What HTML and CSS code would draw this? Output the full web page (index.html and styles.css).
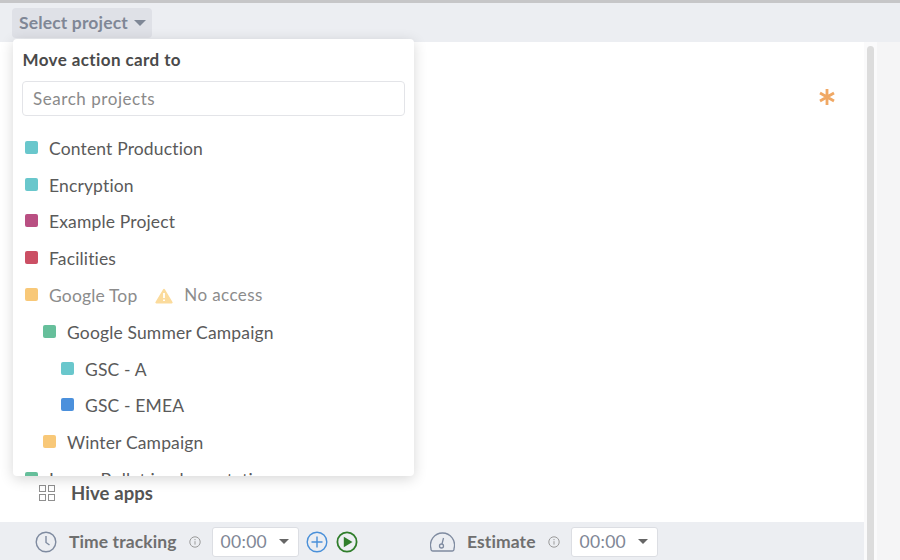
FILE: index.html
```html
<!DOCTYPE html>
<html lang="en">
<head>
<meta charset="utf-8">
<title>Move action card</title>
<link rel="stylesheet" href="styles.css">
</head>
<body>
<div class="page">
  <div class="topline"></div>
  <header class="header">
    <button class="select-btn">Select project <span class="caret caret-btn"></span></button>
  </header>
  <div class="main">
    <div class="content">
      <div class="body">
        <svg class="asterisk" width="18" height="18" viewBox="0 0 18 18" fill="none" stroke="#f0a864" stroke-width="2.800"><path d="M9 1v16M2 5l14 8M16 5L2 13"/></svg>
        <div class="apps">
          <svg class="apps-icon" width="16" height="16" viewBox="0 0 16 16" fill="none" stroke="#8f8f8f" stroke-width="1"><rect x="0.5" y="0.5" width="6" height="6"/><rect x="9.5" y="0.5" width="6" height="6"/><rect x="0.5" y="9.5" width="6" height="6"/><rect x="9.5" y="9.5" width="6" height="6"/></svg>
          <span>Hive apps</span>
        </div>
      </div>
      <div class="footer">
        <div class="group group-time">
          <svg class="ficon" width="22" height="22" viewBox="0 0 22 22" fill="none" stroke="#7f8ba0" stroke-width="1.4"><circle cx="11" cy="11" r="9.800"/><path d="M11 5v6.500l3.500 2.500"/></svg>
          <span class="flabel">Time tracking</span>
          <svg class="info" width="12" height="12" viewBox="0 0 12 12" fill="none" stroke="#9a9a9a" stroke-width="1"><circle cx="6" cy="6" r="5.200"/><path d="M6 5.200v3.400M6 3v1.200"/></svg>
          <div class="time"><span>00:00</span><span class="caret"></span></div>
          <svg class="add" width="22" height="22" viewBox="0 0 22 22" fill="none" stroke="#4a90d9" stroke-width="1.4"><circle cx="11" cy="11" r="9.800"/><path d="M11 5.500v11M5.500 11h11"/></svg>
          <svg class="play" width="22" height="22" viewBox="0 0 22 22"><circle cx="11" cy="11" r="9.600" fill="none" stroke="#2f7d2b" stroke-width="1.800"/><path d="M7.800 5.800L16.500 11l-8.700 5.200z" fill="#2f7d2b"/></svg>
        </div>
        <div class="group group-estimate">
          <svg class="ficon" width="25" height="20" viewBox="0 0 25 20" fill="none" stroke="#7f8ba0" stroke-width="1.3"><path d="M3 19h19a2 2 0 0 0 2-2.500A12 12 0 0 0 12.500 1 12 12 0 0 0 1 16.500 2 2 0 0 0 3 19z"/><circle cx="11.500" cy="14" r="2"/><path d="M12 12l1.500-6"/></svg>
          <span class="flabel">Estimate</span>
          <svg class="info" width="12" height="12" viewBox="0 0 12 12" fill="none" stroke="#9a9a9a" stroke-width="1"><circle cx="6" cy="6" r="5.200"/><path d="M6 5.200v3.400M6 3v1.200"/></svg>
          <div class="time"><span>00:00</span><span class="caret"></span></div>
        </div>
      </div>
    </div>
    <div class="gutter"><div class="thumb"></div></div>
    <div class="rightpane"></div>
  </div>
  <div class="popover">
    <h2 class="pop-title">Move action card to</h2>
    <input class="search" type="text" placeholder="Search projects">
    <ul class="list">
      <li class="row"><i class="sq teal"></i>Content Production</li>
      <li class="row"><i class="sq teal"></i>Encryption</li>
      <li class="row"><i class="sq plum"></i>Example Project</li>
      <li class="row"><i class="sq red"></i>Facilities</li>
      <li class="row muted"><i class="sq amber"></i>Google Top
        <svg class="warn" width="18" height="16" viewBox="0 0 18 16"><path d="M9 .8a1.200 1.200 0 0 1 1 .6l7.500 12.700a1 1 0 0 1-.9 1.500H1.400a1 1 0 0 1-.9-1.500L8 1.400A1.200 1.200 0 0 1 9 .8z" fill="#fbdb9c"/><path d="M9 5v5M9 11.500v1.500" stroke="#fff" stroke-width="1.800"/></svg>
        <span class="noaccess">No access</span></li>
      <li class="row lvl1"><i class="sq green"></i>Google Summer Campaign</li>
      <li class="row lvl2"><i class="sq teal"></i>GSC - A</li>
      <li class="row lvl2"><i class="sq blue"></i>GSC - EMEA</li>
      <li class="row lvl1"><i class="sq amber"></i>Winter Campaign</li>
      <li class="row"><i class="sq green"></i>Image Bullet implementation</li>
    </ul>
  </div>
</div>
</body>
</html>
```
FILE: styles.css
```css
* { box-sizing: border-box; }
html, body { margin: 0; padding: 0; }
body { width: 900px; height: 560px; overflow: hidden; background: #fff; font-family: "Lato", "Open Sans", sans-serif; color: #555; }
.page { position: relative; width: 900px; height: 560px; overflow: hidden; display: flex; flex-direction: column; }
.topline { height: 3px; background: #c6c6c8; flex: none; }
.header { height: 39px; flex: none; background: #eceef2; padding: 5px 0 0 12px; }
.select-btn { display: flex; align-items: center; gap: 6px; width: 140px; height: 30px; padding: 0 0 2px 7px; border: 0; border-radius: 4px; background: #dfe1e7; color: #7f8796; font: 700 17.500px "Lato", sans-serif; letter-spacing: .15px; }
.main { flex: 1; display: flex; min-height: 0; overflow: hidden; }
.content { width: 864px; display: flex; flex-direction: column; }
.body { position: relative; flex: 1; }
.asterisk { position: absolute; left: 818px; top: 46px; }
.apps { position: absolute; left: 39px; top: 440px; display: flex; align-items: center; gap: 16px; font-size: 18.500px; font-weight: 700; color: #555; letter-spacing: .1px; }
.footer { height: 38px; flex: none; background: #eceef2; display: flex; align-items: center; padding-top: 1px; }
.group { display: flex; align-items: center; }
.group-time { margin-left: 35px; width: 395px; }
.flabel { font-size: 17.500px; font-weight: 700; color: #6f6f6f; margin-left: 12px; letter-spacing: .1px; }
.info { margin-left: 12px; }
.time { width: 87px; height: 30px; margin-left: 11px; padding: 0 9px 0 8px; background: #fff; border: 1px solid #dcdee3; border-radius: 3px; display: flex; align-items: center; justify-content: space-between; font-size: 17.500px; color: #7f8796; letter-spacing: .3px; }
.add { margin-left: 7px; }
.play { margin-left: 8px; }
.caret { display: inline-block; width: 0; height: 0; border-left: 5px solid transparent; border-right: 5px solid transparent; border-top: 5px solid #666; }
.caret-btn { border-left-width: 6px; border-right-width: 6px; border-top-width: 6px; border-top-color: #7f8796; margin-top: 1px; }
.gutter { width: 13px; background: #fafafb; padding: 4px 1px 0 3px; flex: none; overflow: hidden; }
.thumb { width: 7px; height: 560px; background: #dcdcdc; border-radius: 4px; }
.rightpane { flex: 1; background: #f5f5f6; }
.popover { position: absolute; left: 13px; top: 39px; width: 401px; height: 437px; overflow: hidden; background: #fff; border-radius: 4px; box-shadow: 0 3px 14px rgba(0,0,0,.16); padding: 0 8px; }
.pop-title { margin: 11px 0 0 1.500px; font-size: 17px; line-height: 20px; font-weight: 700; color: #4a4a4a; letter-spacing: .4px; }
.search { display: block; width: 383px; height: 35px; margin: 11px 0 0 1px; padding: 0 10px; border: 1px solid #e3e4e8; border-radius: 4px; outline: 0; font: 17px "Lato", sans-serif; color: #777; letter-spacing: .55px; }
.search::placeholder { color: #8a8a8a; opacity: 1; }
.list { list-style: none; margin: 14px 0 0; padding: 0; }
.row { height: 36.800px; display: flex; align-items: center; padding-left: 4px; font-size: 17.500px; color: #5a5a5a; white-space: nowrap; letter-spacing: .15px; }
.sq { width: 12.500px; height: 13px; border-radius: 2px; margin-right: 11.500px; margin-top: -2px; flex: none; }
.lvl1 { padding-left: 22px; }
.lvl2 { padding-left: 40px; }
.teal { background: #69c7cc; }
.plum { background: #b94f82; }
.red { background: #cb4f64; }
.amber { background: #f8c878; }
.green { background: #66bf9b; }
.blue { background: #4b90dc; }
.muted { color: #8c8c8c; }
.warn { margin-left: 18px; }
.noaccess { margin-left: 11px; font-size: 17px; color: #8c8c8c; margin-top: -2px; letter-spacing: .4px; }
```
